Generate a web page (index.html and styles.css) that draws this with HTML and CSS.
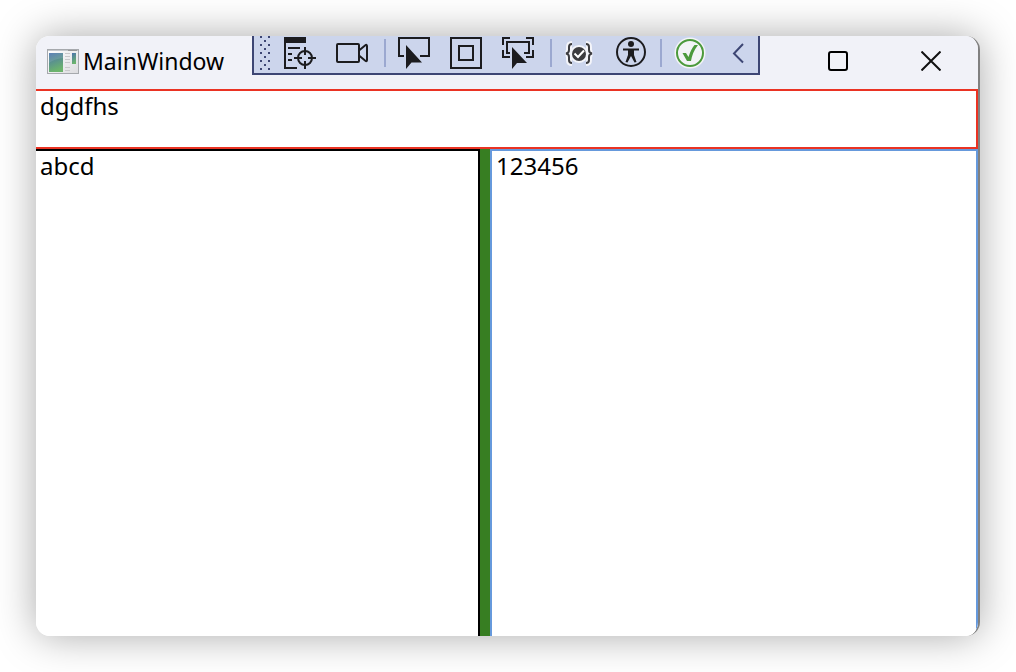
FILE: index.html
```html
<!DOCTYPE html>
<html lang="en">
<head>
<meta charset="utf-8">
<title>MainWindow</title>
<link rel="stylesheet" href="styles.css">
</head>
<body>
<main class="window">
  <header class="titlebar">
    <svg class="app-icon" width="32" height="26" viewBox="0 0 32 26" aria-hidden="true">
      <defs>
        <linearGradient id="pane" x1="0" y1="0" x2="0.3" y2="1"><stop offset="0" stop-color="#4a72ae"/><stop offset="1" stop-color="#6cb46c"/></linearGradient>
        <linearGradient id="frame" x1="0" y1="0" x2="1" y2="1"><stop offset="0" stop-color="#fff"/><stop offset="1" stop-color="#dcdcdf"/></linearGradient>
      </defs>
      <rect x=".5" y=".5" width="31" height="24" fill="url(#frame)" stroke="#a6a9ad"/>
      <path d="M1 1.500h30" stroke="#c5c8cc"/><path d="M21 1.500h9" stroke="#999"/>
      <rect x="2" y="4" width="14" height="19" fill="url(#pane)"/>
      <path d="M2 14Q7 10 16 9V4H2z" fill="#fff" opacity=".1"/>
      <rect x="25" y="4" width="4" height="11" fill="url(#pane)"/>
      <path d="M18 4.500h5M18 7.500h5M18 10.500h5M18 13.500h5M18 18.500h5M18 21.500h5" stroke="#c9c9cb"/>
    </svg>
    <h1 class="title">MainWindow</h1>
    <div class="caption-buttons">
      <button class="caption-button" type="button" aria-label="Maximize">
        <svg width="20" height="20" viewBox="0 0 20 20"><rect x="1" y="1" width="18" height="18" rx="2" fill="none" stroke="#000" stroke-width="2"/></svg>
      </button>
      <button class="caption-button" type="button" aria-label="Close">
        <svg width="20" height="20" viewBox="0 0 20 20"><path d="M.5.5l19 19M19.5.5L.5 19.5" fill="none" stroke="#111" stroke-width="2"/></svg>
      </button>
    </div>
    <div class="debug-bar" role="toolbar" aria-label="Debug tools">
      <svg class="grip" width="10" height="34" viewBox="0 0 10 34" aria-hidden="true">
        <path d="M1 0V34M9 0V34" stroke="#3d4674" stroke-width="2" stroke-dasharray="2 6"/>
        <path d="M5 4V34" stroke="#3d4674" stroke-width="2" stroke-dasharray="2 6"/>
      </svg>
      <div class="tools">
        <button class="tool" type="button" aria-label="Live visual tree">
          <svg width="32" height="37" viewBox="0 0 32 37">
            <path d="M0 1h22v6H0z" fill="#1c1c1f"/>
            <path d="M1 6v26h12M4 12h12M4 18h4M4 24h4" class="line"/>
            <circle cx="21" cy="22" r="7" class="line"/>
            <path d="M21 11v8M21 25v8M10 22h8M24 22h8" class="line"/>
          </svg>
        </button>
        <button class="tool" type="button" aria-label="Record">
          <svg width="32" height="37" viewBox="0 0 32 37"><rect x="1" y="8" width="22" height="18" rx="1" class="line"/><path d="M23 14.500L29 9.500Q31 8 31 10v14Q31 26 29 24.500L23 19.500" class="line"/></svg>
        </button>
      </div>
      <span class="separator"></span>
      <div class="tools">
        <button class="tool" type="button" aria-label="Select element">
          <svg width="32" height="37" viewBox="0 0 32 37"><path d="M6 20H1V2h30v18h-9" class="line"/><path d="M8 9v24l5.500-6.500L24 26.500z" class="solid"/></svg>
        </button>
        <button class="tool" type="button" aria-label="Display layout adorners">
          <svg width="32" height="37" viewBox="0 0 32 37"><path d="M1 2h30v30H1zM9 10h14v14H9z" class="line"/></svg>
        </button>
        <button class="tool" type="button" aria-label="Track focused element">
          <svg width="32" height="37" viewBox="0 0 32 37"><path d="M1 9V2h7M24 2h7v7M1 14v7h7M31 14v7h-7M8 17H5V6h22v11h-5" class="line"/><path d="M10 11v22l5-6L25 27z" class="solid"/></svg>
        </button>
      </div>
      <span class="separator"></span>
      <div class="tools">
        <button class="tool" type="button" aria-label="Binding failures">
          <svg width="32" height="37" viewBox="0 0 32 37">
            <path d="M8 8Q5 8 5 11v3q0 3-3 3.500Q5 18 5 21v3q0 3 3 3M22 8q3 0 3 3v3q0 3 3 3.500Q25 18 25 21v3q0 3-3 3" fill="none" stroke="#f4f5fa" stroke-width="6"/>
            <circle cx="15" cy="18" r="9" fill="#f4f5fa"/>
            <path d="M8 8Q5 8 5 11v3q0 3-3 3.500Q5 18 5 21v3q0 3 3 3M22 8q3 0 3 3v3q0 3 3 3.500Q25 18 25 21v3q0 3-3 3" fill="none" stroke="#3c3c3f" stroke-width="2"/>
            <circle cx="15" cy="18" r="7" fill="#3c3c3f"/>
            <path d="M10.500 17.500l3.500 3.500 6-6.500" fill="none" stroke="#fff" stroke-width="2"/>
          </svg>
        </button>
        <button class="tool" type="button" aria-label="Accessibility checker">
          <svg width="32" height="37" viewBox="0 0 32 37"><circle cx="15" cy="16" r="14" class="line"/><circle cx="15" cy="8" r="3" fill="#1c1c1f"/><path d="M7 13.500h16" class="line"/><path d="M12 13h6v6l2.500 7-2 .5L15 20l-3.500 6.500-2-.5L12 19z" fill="#1c1c1f"/></svg>
        </button>
      </div>
      <span class="separator separator-even"></span>
      <div class="tools">
        <button class="tool" type="button" aria-label="Hot reload available">
          <svg width="32" height="37" viewBox="0 0 32 37"><circle cx="16" cy="17" r="15.500" fill="#f3f4f6"/><circle cx="16" cy="17" r="13" fill="none" stroke="#4c9a3c" stroke-width="2"/><path d="M8.500 17h3.500l2.500 4Q17 13 20.500 9h3.500Q18.500 16 17 25h-4Z" fill="#4c9a3c"/></svg>
        </button>
        <button class="tool" type="button" aria-label="Collapse toolbar">
          <svg width="32" height="37" viewBox="0 0 32 37"><path d="M17 8l-9 9.500 9 9" fill="none" stroke="#3d4674" stroke-width="2"/></svg>
        </button>
      </div>
    </div>
  </header>
  <textarea class="field field-top" aria-label="Top text" spellcheck="false">dgdfhs</textarea>
  <div class="panes">
    <textarea class="field field-left" aria-label="Left text" spellcheck="false">abcd</textarea>
    <div class="splitter" role="separator" aria-orientation="vertical"></div>
    <textarea class="field field-right" aria-label="Right text" spellcheck="false">123456</textarea>
  </div>
</main>
</body>
</html>
```
FILE: styles.css
```css
* {
  box-sizing: border-box;
}

body {
  margin: 0;
  min-height: 100vh;
  padding: 36px;
  display: flex;
  background: #fff;
  color: #000;
  font-family: "Noto Sans", "Open Sans", sans-serif;
}

.window {
  flex: 1;
  min-width: 0;
  display: flex;
  flex-direction: column;
  overflow: hidden;
  border-right: 2px solid #808080;
  border-radius: 14px;
  background: #fff;
  box-shadow: 0 0 40px rgba(0, 0, 0, 0.34);
}

.titlebar {
  position: relative;
  flex: none;
  height: 53px;
  display: flex;
  align-items: center;
  gap: 4px;
  padding: 0 1px 4px 11px;
  background: #f1f2f8;
}

.app-icon {
  margin-top: 2px;
}

.title {
  margin: 0;
  font-size: 23px;
  line-height: 48px;
  font-weight: 400;
}

.caption-buttons {
  display: flex;
  align-self: stretch;
  margin-left: auto;
}

.caption-button {
  width: 93px;
  padding: 0;
  display: flex;
  align-items: center;
  justify-content: center;
  border: 0;
  background: none;
}

.debug-bar {
  position: absolute;
  top: 0;
  left: 216px;
  display: flex;
  padding-left: 6px;
  border: 2px solid #3d4674;
  border-top: 0;
  background: #ccd5ec;
}

.grip {
  margin-right: 14px;
}

.tools {
  display: flex;
  gap: 20px;
}

.tool {
  width: 32px;
  padding: 0;
  border: 0;
  background: none;
}

.tool svg {
  display: block;
}

.line {
  fill: none;
  stroke: #1c1c1f;
  stroke-width: 2px;
}

.solid {
  fill: #1c1c1f;
}

.separator {
  width: 2px;
  height: 28px;
  margin: 3px 12px 0 16px;
  background: #9ba8d0;
}

.separator-even {
  margin-left: 12px;
}

.field {
  display: block;
  margin: 0;
  padding: 0 4px;
  border: 2px solid;
  border-radius: 0;
  outline: 0;
  resize: none;
  overflow: hidden;
  background: #fff;
  color: #000;
  font-family: inherit;
  font-size: 24px;
  line-height: 30px;
}

.field-top {
  flex: none;
  height: 60px;
  border-color: #ea3323;
  border-left: 0;
}

.panes {
  flex: 1;
  display: grid;
  grid-template-columns: 444fr 10px 488fr;
}

.field-left {
  min-width: 0;
  border-color: #000;
  border-width: 2px 2px 0 0;
}

.splitter {
  background: #377e22;
}

.field-right {
  min-width: 0;
  border-color: #6699dc;
  border-bottom: 0;
}
```
